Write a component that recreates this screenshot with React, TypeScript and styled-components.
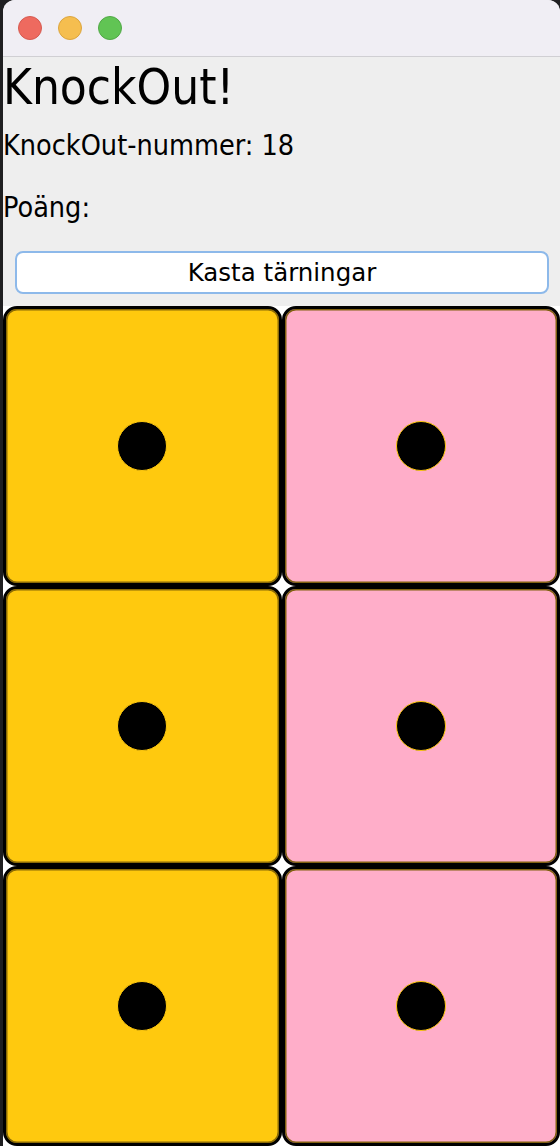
import React from 'react';
import styled, { createGlobalStyle } from 'styled-components';

const GlobalStyle = createGlobalStyle`
  html, body {
    margin: 0;
    padding: 0;
    background-color: #1f1f21;
  }
  #root {
    min-height: 1146px;
  }
`;

type Tint = 'yellow' | 'pink';

const dieColors: Record<Tint, { fill: string; rim: string }> = {
  yellow: { fill: '#ffc90e', rim: '#8a6a06' },
  pink: { fill: '#ffaec9', rim: '#806010' },
};

const dice: Tint[] = ['yellow', 'pink', 'yellow', 'pink', 'yellow', 'pink'];

const Die: React.FC<{ tint: Tint }> = ({ tint }) => (
  <DieBox $tint={tint}>
    <Pip />
  </DieBox>
);

const App: React.FC = () => {
  return (
    <>
      <GlobalStyle />
      <Window>
        <TitleBar>
          <Light $color="#ee6a5f" $edge="#d65a50" />
          <Light $color="#f5be4f" $edge="#dca53e" />
          <Light $color="#61c454" $edge="#51a846" />
        </TitleBar>
        <Content>
          <Title>KnockOut!</Title>
          <Label>KnockOut-nummer: 18</Label>
          <Label $gap={34}>Poäng:</Label>
          <RollButton type="button">Kasta tärningar</RollButton>
          <DiceGrid>
            {dice.map((tint, i) => (
              <Die key={i} tint={tint} />
            ))}
          </DiceGrid>
        </Content>
      </Window>
    </>
  );
};

const Window = styled.div`
  margin-left: 3px;
  width: 557px;
  height: 1146px;
  border-radius: 12px 12px 0 0;
  overflow: hidden;
  background-color: #eeeeee;
  display: flex;
  flex-direction: column;
`;

const TitleBar = styled.div`
  height: 56px;
  flex-shrink: 0;
  display: flex;
  align-items: center;
  gap: 16px;
  padding-left: 15px;
  background-color: #f0eef4;
  border-bottom: 1px solid #d0cfd3;
`;

const Light = styled.span<{ $color: string; $edge: string }>`
  width: 24px;
  height: 24px;
  box-sizing: border-box;
  border-radius: 50%;
  background-color: ${(p) => p.$color};
  border: 1px solid ${(p) => p.$edge};
`;

const Content = styled.div`
  flex: 1;
  display: flex;
  flex-direction: column;
  font-family: 'DejaVu Sans Condensed', 'DejaVu Sans', sans-serif;
  color: #000;
`;

const Title = styled.h1`
  margin: 6px 0 0 0;
  font-size: 49px;
  line-height: 49px;
  font-weight: 400;
`;

const Label = styled.div<{ $gap?: number }>`
  margin-top: ${(p) => p.$gap ?? 20}px;
  font-size: 28.5px;
  line-height: 28px;
`;

const RollButton = styled.button`
  margin: 29px 11px 0 12px;
  height: 43px;
  flex-shrink: 0;
  box-sizing: border-box;
  background-color: #ffffff;
  border: 2px solid #8db9ea;
  border-radius: 8px;
  font-family: 'DejaVu Sans', sans-serif;
  font-size: 24.5px;
  color: #000;
  padding: 0;
`;

const DiceGrid = styled.div`
  margin-top: 12px;
  display: grid;
  grid-template-columns: 1fr 1fr;
  grid-template-rows: repeat(3, 280px);
  background-color: #ffffff;
`;

const DieBox = styled.div<{ $tint: Tint }>`
  box-sizing: border-box;
  border: 3.5px solid #000;
  border-radius: 14px;
  background-color: ${(p) => dieColors[p.$tint].fill};
  box-shadow: inset 0 0 0 1.5px ${(p) => dieColors[p.$tint].rim};
  display: flex;
  align-items: center;
  justify-content: center;
`;

const Pip = styled.span`
  width: 50px;
  height: 50px;
  box-sizing: border-box;
  border-radius: 50%;
  background-color: #000;
  border: 1.5px solid #ffc90e;
`;

export default App;
